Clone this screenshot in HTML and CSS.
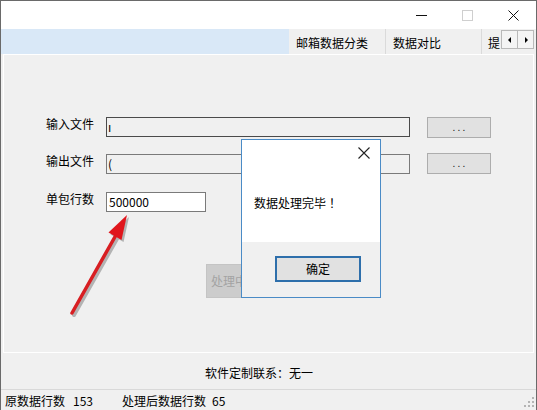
FILE: index.html
```html
<!DOCTYPE html>
<html lang="zh-CN">
<head>
<meta charset="utf-8">
<title>数据处理</title>
<link rel="stylesheet" href="styles.css">
</head>
<body>
<div class="window">
  <div class="titlebar">
    <span class="ctl"><svg width="11" height="11" viewBox="0 0 11 11"><rect x="0" y="5" width="11" height="1" fill="#111"/></svg></span>
    <span class="ctl"><svg width="11" height="11" viewBox="0 0 11 11"><rect x="0.5" y="0.5" width="10" height="10" fill="none" stroke="#cfcfcf"/></svg></span>
    <span class="ctl"><svg width="11" height="11" viewBox="0 0 11 11"><path d="M0.5 0.5L10.5 10.5M10.5 0.5L0.5 10.5" stroke="#111" stroke-width="1"/></svg></span>
  </div>
  <div class="tabstrip">
    <div class="tab-fill"></div>
    <div class="tab">邮箱数据分类</div>
    <div class="tab tab-2">数据对比</div>
    <div class="tab tab-3">提</div>
    <div class="scroll">
      <span class="sbtn"><svg width="4" height="6" viewBox="0 0 4 6"><path d="M3 0V6L0 3Z" fill="#000"/></svg></span>
      <span class="sbtn"><svg width="4" height="6" viewBox="0 0 4 6"><path d="M1 0V6L4 3Z" fill="#000"/></svg></span>
    </div>
  </div>
  <div class="tabpage">
    <div class="page">
      <div class="row">
        <span class="label">输入文件</span>
        <span class="field field-long field-focus">ı</span>
        <span class="browse">. . .</span>
      </div>
      <div class="row row-2">
        <span class="label">输出文件</span>
        <span class="field field-long">(</span>
        <span class="browse browse-up">. . .</span>
      </div>
      <div class="row row-3">
        <span class="label">单包行数</span>
        <span class="field field-short">500000</span>
      </div>
      <div class="run">处理中，请稍候...</div>
    </div>
  </div>
  <div class="contact">软件定制联系：无一</div>
  <div class="status">
    <span class="st st-a">原数据行数</span>
    <span class="st st-b">153</span>
    <span class="st st-c">处理后数据行数</span>
    <span class="st">65</span>
    <svg class="grip" width="11" height="11" viewBox="0 0 11 11">
      <rect x="8" y="0" width="2" height="2" fill="#b4b4b4"/>
      <rect x="4" y="4" width="2" height="2" fill="#b4b4b4"/>
      <rect x="8" y="4" width="2" height="2" fill="#b4b4b4"/>
      <rect x="0" y="8" width="2" height="2" fill="#b4b4b4"/>
      <rect x="4" y="8" width="2" height="2" fill="#b4b4b4"/>
      <rect x="8" y="8" width="2" height="2" fill="#b4b4b4"/>
    </svg>
  </div>
</div>

<svg class="arrow" width="537" height="410" viewBox="0 0 537 410">
  <g transform="translate(2,2)" opacity="0.25">
    <path d="M72 313L116 235" stroke="#000" stroke-width="4" stroke-linecap="round"/>
    <path d="M127 215L121.5 240L108.5 232.5Z" fill="#000"/>
  </g>
  <path d="M72 313L116 235" stroke="#d81e22" stroke-width="3.5" stroke-linecap="round"/>
  <path d="M127 215L121.5 240L108.5 232.5Z" fill="#e0161c"/>
</svg>

<div class="dialog">
  <div class="dlg-body">
    <div class="dlg-head">
      <svg width="12" height="12" viewBox="0 0 12 12"><path d="M0.5 0.5L11.5 11.5M11.5 0.5L0.5 11.5" stroke="#222" stroke-width="1.1"/></svg>
    </div>
    <div class="dlg-msg">数据处理完毕<span class="bang">！</span></div>
  </div>
  <div class="dlg-foot">
    <span class="ok">确定</span>
  </div>
</div>
</body>
</html>
```

FILE: styles.css
```css
* { box-sizing: border-box; margin: 0; padding: 0; }

html, body {
  width: 537px;
  height: 410px;
  overflow: hidden;
  background: #f0f0f0;
}

body {
  position: relative;
  font-family: "Noto Sans CJK SC", "Microsoft YaHei", sans-serif;
  font-size: 12px;
  color: #000;
}

.window {
  width: 537px;
  height: 410px;
  border: 1px solid #6a6a6a;
  border-bottom: none;
  display: flex;
  flex-direction: column;
  background: #f0f0f0;
}

.titlebar {
  flex: none;
  height: 28px;
  background: #fff;
  display: flex;
  justify-content: flex-end;
}

.ctl {
  width: 46px;
  height: 28px;
  display: flex;
  align-items: center;
  justify-content: center;
}

.tabstrip {
  flex: none;
  height: 25px;
  display: flex;
  background: #f0f0f0;
}

.tab-fill {
  width: 288px;
  background: #d9e8f7;
}

.tab {
  width: 97px;
  padding: 6px 0 0 7px;
  line-height: 16px;
  white-space: nowrap;
  overflow: hidden;
  border-right: 1px solid #dadada;
}

.tab-2 { width: 96px; }

.tab-3 {
  width: 19px;
  padding-left: 6px;
  border-right: none;
}

.scroll {
  display: flex;
  padding-top: 1px;
}

.sbtn {
  width: 17px;
  height: 19px;
  border: 1px solid #b9b9b9;
  background: #f4f4f4;
  display: flex;
  align-items: center;
  justify-content: center;
}

.sbtn + .sbtn { margin-left: -1px; }

.tabpage {
  flex: none;
  height: 299px;
  padding: 0 2px;
}

.page {
  height: 100%;
  border: 1px solid #fff;
  display: flex;
  flex-direction: column;
  padding: 62px 0 0 42px;
}

.row {
  display: flex;
  align-items: flex-start;
  height: 21px;
}

.row-2 { margin-top: 16px; }
.row-3 { margin-top: 17px; }

.label {
  width: 60px;
  line-height: 13px;
  white-space: nowrap;
}

.field {
  height: 20px;
  border: 1px solid #7a7a7a;
  background: #f0f0f0;
  line-height: 18px;
  padding-left: 1px;
  overflow: hidden;
  white-space: nowrap;
}

.field-long { width: 304px; }
.field-focus { border-color: #4a4a4a; }

.field-short {
  width: 100px;
  background: #fff;
  padding-left: 2px;
}

.browse {
  margin-left: 17px;
  width: 64px;
  height: 21px;
  border: 1px solid #adadad;
  background: #e1e1e1;
  text-align: center;
  line-height: 17px;
  font-size: 10px;
  color: #222;
}

.browse-up { margin-top: -1px; }

.run {
  margin: 51px 0 0 160px;
  width: 114px;
  height: 34px;
  border: 1px solid #c4c4c4;
  background: #cccccc;
  color: #a3a3a3;
  line-height: 32px;
  padding-left: 4px;
  white-space: nowrap;
  overflow: hidden;
}

.contact {
  flex: none;
  height: 36px;
  padding: 12px 0 0 204px;
  line-height: 16px;
}

.status {
  flex: none;
  height: 21px;
  border-top: 1px solid #d9d9d9;
  padding: 3px 1px 0 4px;
  display: flex;
  line-height: 16px;
}

.st { white-space: nowrap; }
.st-a { width: 68px; }
.st-b { width: 49px; }
.st-c { width: 90px; }

.grip {
  margin-left: auto;
  margin-top: 4px;
}

.arrow {
  position: absolute;
  left: 0;
  top: 0;
  pointer-events: none;
}

.dialog {
  position: absolute;
  left: 241px;
  top: 139px;
  width: 140px;
  height: 159px;
  border: 1px solid #4a8bc6;
  display: flex;
  flex-direction: column;
  background: #fff;
}

.dlg-body {
  height: 102px;
  background: #fff;
}

.dlg-head {
  height: 20px;
  display: flex;
  justify-content: flex-end;
  padding: 7px 10px 0 0;
}

.dlg-msg {
  padding: 35px 0 0 12px;
  line-height: 16px;
  white-space: nowrap;
}

.bang { padding-left: 3px; }

.dlg-foot {
  flex: 1;
  background: #f0f0f0;
  padding: 14px 0 0 33px;
}

.ok {
  display: block;
  width: 86px;
  height: 26px;
  border: 2px solid #2e6fab;
  background: #e1e1e1;
  text-align: center;
  line-height: 22px;
}
```
